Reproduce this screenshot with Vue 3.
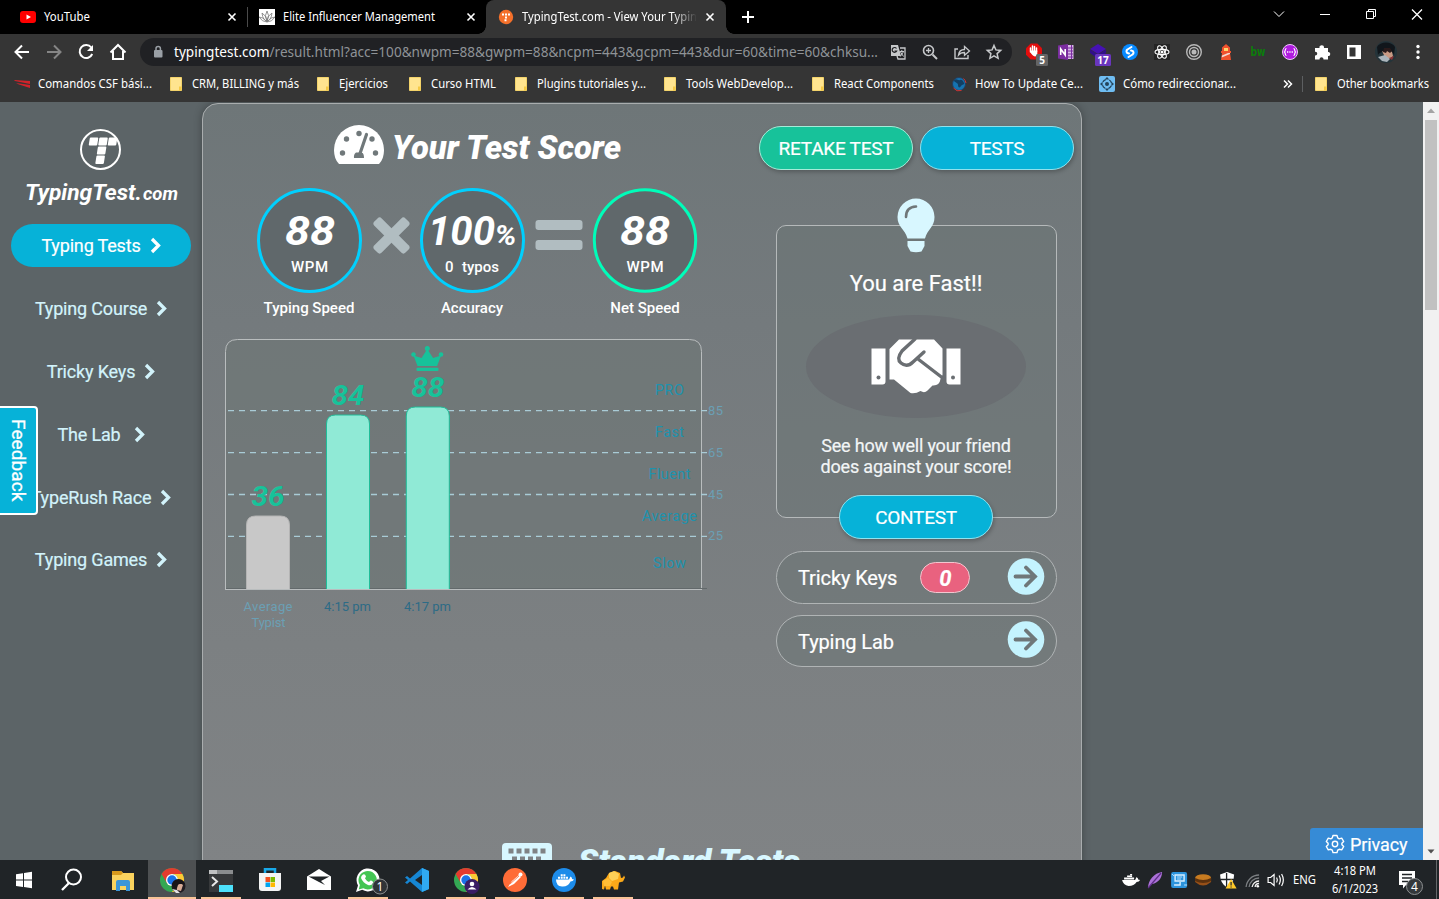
<script setup>
const bookmarks = [
  { icon: 'red', label: 'Comandos CSF bási...', w: 114, cell: 154 },
  { icon: 'folder', label: 'CRM, BILLING y más', w: 107, cell: 147 },
  { icon: 'folder', label: 'Ejercicios', w: 49, cell: 92 },
  { icon: 'folder', label: 'Curso HTML', w: 65, cell: 106 },
  { icon: 'folder', label: 'Plugins tutoriales y...', w: 109, cell: 149 },
  { icon: 'folder', label: 'Tools WebDevelop...', w: 107, cell: 148 },
  { icon: 'folder', label: 'React Components', w: 100, cell: 141 },
  { icon: 'globe', label: 'How To Update Ce...', w: 108, cell: 148 },
  { icon: 'move', label: 'Cómo redireccionar...', w: 113, cell: 180 },
]

const bookmarkIcons = {
  red: '<path d="M0 4l16 1v3L1 5zM2 7l14 2v3L5 8.500z" fill="#d2232a"/>',
  folder: '<path d="M2.500 1.500h11v13h-11z" fill="#ffe48f" stroke="#f3d36b"/><path d="M11 10.500h2.500V14.500H11z" fill="#f5c945"/>',
  globe: '<circle cx="8" cy="8" r="6.500" fill="#1673b0" stroke="#263d5c"/><path d="M3 4c3-2 4 1 6 0s3 1 4 3-2 1-3 3-3 2-3-1-4-2-4-5z" fill="#123f63"/><path d="M2.500 12a7 7 0 0 0 8 2.500M12.500 2.500A7 7 0 0 1 15 7" stroke="#d2332f" fill="none"/>',
  move: '<rect width="16" height="16" rx="2" fill="#6fbdf2"/><circle cx="8" cy="8" r="2" fill="#24445c"/><circle cx="8" cy="8" r="4.600" fill="none" stroke="#24445c" stroke-width="1.300" stroke-dasharray="3.600 3.630" stroke-dashoffset="-1.800"/><path d="M8 1l2.300 2.600H5.700zM8 15l2.300-2.600H5.700zM1 8l2.600-2.300v4.600zM15 8l-2.600-2.300v4.600z" fill="#24445c"/>',
}

const navIcons = [
  '<path d="M19 12H6M12 5.500L5.500 12l6.500 6.500" fill="none" stroke="#fff" stroke-width="2"/>',
  '<path d="M5 12h13M12 5.500l6.500 6.500-6.500 6.500" fill="none" stroke="#858585" stroke-width="2"/>',
  '<path d="M17.300 7.500A6.500 6.500 0 1 0 18.200 14" fill="none" stroke="#fff" stroke-width="2"/><path d="M19 5v6h-6z" fill="#fff"/>',
  '<path d="M4.500 12.500L12 5l7.500 7.500M7 11v8h10v-8" fill="none" stroke="#fff" stroke-width="2"/>',
]

const pageActions = [
  '<path d="M5 5h7l3 11H5z" fill="#c6c8ca"/><path d="M14 8h5v11h-7l-1-3" fill="none" stroke="#c6c8ca" stroke-width="1.300"/><path d="M10.500 8.500a2.400 2.400 0 1 0 .2 2.500H8.500" fill="none" stroke="#202124" stroke-width="1.200"/><path d="M13.500 11.500H18M15.800 10v1.500M14.500 12l3 4.500M17.300 12l-3 4.500" stroke="#c6c8ca"/>',
  '<circle cx="10.500" cy="10.500" r="5" fill="none" stroke="#c6c8ca" stroke-width="1.600"/><path d="M14.500 14.500L19 19" stroke="#c6c8ca" stroke-width="2"/><path d="M8 10.500h5M10.500 8v5" stroke="#c6c8ca" stroke-width="1.300"/>',
  '<path d="M8 9H5v9.500h13V15" fill="none" stroke="#c6c8ca" stroke-width="1.400"/><path d="M8.500 15c.5-4 2.500-5.500 6-5.500V6.500L19.500 11l-5 4.300V12.500c-3 0-4.500.5-6 2.500z" fill="none" stroke="#c6c8ca" stroke-width="1.300"/>',
  '<path d="M12 5.500l1.900 4.400 4.800.5-3.600 3.200 1 4.700-4.100-2.500-4.100 2.500 1-4.700-3.600-3.200 4.800-.5z" fill="none" stroke="#c6c8ca" stroke-width="1.500"/>',
]

const extensions = [
  '<path d="M8.700 3.500h6.600L20 8.200v6.600l-4.700 4.700H8.700L4 14.800V8.200z" fill="#e40d0d"/><path d="M8.500 12V8m2 3V6m2 5V6.500m2 5V8" stroke="#fff" stroke-width="1.500" stroke-linecap="round"/><path d="M7.800 10.500h7.500v4c-1 3-5 3-7.500-4z" fill="#fff"/><rect x="14" y="14" width="12" height="12" rx="1.500" fill="#646464"/><text x="20" y="24" text-anchor="middle" class="badge">5</text>',
  '<path d="M14 5h5.500v14H14z" fill="#d9b7e8"/><path d="M4 5.500L14 4v16L4 18.500z" fill="#7b2da0"/><path d="M6.700 15V9l4.500 6V9" fill="none" stroke="#fff" stroke-width="1.600"/><path d="M14 8h5m-5 3h5m-5 3h5m-5 3h5" stroke="#7b2da0" stroke-width="1.200"/><path d="M17.500 5v14" stroke="#7b2da0" stroke-width="1"/>',
  '<path d="M12 4l8 5-8 5-8-5z" fill="#4612b4"/><path d="M4 9.500l8 5 8-5V13l-8 6-8-6z" fill="#30108a"/><rect x="9" y="14" width="16" height="12" rx="1.500" fill="#6936bd"/><text x="17" y="24" text-anchor="middle" class="badge">17</text>',
  '<circle cx="12" cy="12" r="8" fill="#078aff"/><path d="M13.500 7l-4 2.500a2 2 0 0 0 .5 3.700l1 .3M10.500 17l4-2.500a2 2 0 0 0-.5-3.700l-1-.3" fill="none" stroke="#fff" stroke-width="2" stroke-linecap="round"/>',
  '<path d="M4 4h16v16H4z" fill="#242424"/><g fill="none" stroke="#fff" stroke-width="1.100"><ellipse cx="12" cy="12" rx="7" ry="2.600"/><ellipse cx="12" cy="12" rx="7" ry="2.600" transform="rotate(60 12 12)"/><ellipse cx="12" cy="12" rx="7" ry="2.600" transform="rotate(120 12 12)"/></g><circle cx="12" cy="12" r="1.500" fill="#fff"/>',
  '<g fill="none" stroke="#b9b9b9" stroke-width="1.400"><circle cx="12" cy="12" r="7.300"/><circle cx="12" cy="12" r="4.500"/></g><circle cx="12" cy="12" r="2.500" fill="#b9b9b9"/>',
  '<path d="M8 7.500L12 4l4 3.500V11h1v2H7v-2h1zM8 13h8l1 7H7z" fill="#f0512d"/><path d="M10 8h4v3h-4z" fill="#ffd46b"/><path d="M8 15.500l6-2.500h2v1l-8.300 3.500z" fill="#f6d6cf"/>',
  '<text x="12" y="16" text-anchor="middle" fill="#0b7d0b" class="bw" textLength="15" lengthAdjust="spacingAndGlyphs">bw</text>',
  '<circle cx="12" cy="12" r="7.500" fill="#b01be0" stroke="#f0c8ff"/><path d="M8.500 8.500c-2 0-.5 2.500-2 3.500 1.500 1 0 3.500 2 3.500M15.500 8.500c2 0 .5 2.500 2 3.500-1.500 1 0 3.500-2 3.500" fill="none" stroke="#fff" stroke-width="1.200"/><path d="M9 12h6" stroke="#fff" stroke-width="1.300" stroke-dasharray="1.300 1"/>',
  '<path d="M5 8h4.500c-1-3 5-4 4.500 0h4v4c3-.5 3 4.500 0 4v3.500h-4.500c0-3-4-3-4 0H5v-4c3 .3 3-4 0-3.700z" fill="#fff"/>',
  '<path d="M5 5h14v14H5z" fill="#fff"/><path d="M7.500 7.500h6v9h-6z" fill="#353535"/>',
  '<circle cx="12" cy="12" r="11" fill="#24343a"/><path d="M3 7c3-6 15-6 18 0l-1 8c-2-5-6-3-8-6-2 4-6 2-8 6z" fill="#11161b"/><path d="M8 11c3 2 6-2 10 1l1 4c-3 4-6 3-8 1z" fill="#c99a84"/><path d="M9 12l3 1 1-2 3 2 2-2-2-3-6 0z" fill="#2a1a1a"/><path d="M4 17l7-2 5 4-3 3-5-1z" fill="#aab4bb"/><path d="M15 18l5-2-2 4z" fill="#8b3437"/>',
  '<g fill="#fff"><circle cx="12" cy="6.500" r="1.700"/><circle cx="12" cy="12" r="1.700"/><circle cx="12" cy="17.500" r="1.700"/></g>',
]

const chromeLogo = '<circle cx="13" cy="13" r="12" fill="#34a853"/><path d="M2.600 7a12 12 0 0 1 20.800 0H13L7.800 16z" fill="#e33b2e"/><path d="M23.400 7A12 12 0 0 1 13 25l5.200-9A6 6 0 0 0 13 7z" fill="#fcc934"/><circle cx="13" cy="13" r="6" fill="#fff"/><circle cx="13" cy="13" r="4.700" fill="#1a73e8"/>'

const tasks = [
  { cell: 48, art: '<path d="M5 7.200l7-1V12.600H5zM13 6l8-1.200v7.800h-8zM5 13.500h7v6.400l-7-1zM13 13.500h8v7.800L13 20z" fill="#fff"/>' },
  { cell: 49, art: '<circle cx="13.500" cy="10" r="7.500" fill="none" stroke="#fff" stroke-width="2"/><path d="M9 16L2 23" stroke="#fff" stroke-width="2.300"/>' },
  { cell: 51, art: '<path d="M2 4h9l2 2h11v17H2z" fill="#fbd35e"/><path d="M2 4h9l2 2-2 2H2z" fill="#d99a1c"/><path d="M6 15q0-2 2-2h10q2 0 2 2v9h-4v-5h-6v5H6z" fill="#3c96d8"/>' },
  { cell: 48, active: true, art: chromeLogo + '<circle cx="19.500" cy="19" r="7" fill="#201b20"/><path d="M16 17l5-2 3 3-2 6-4-1z" fill="#d7aa95"/><path d="M13 18c2-7 10-7 13-1-4 1-5-1-7 1l-2 6z" fill="#171418"/><path d="M13 22l5 1 3 3h-4z" fill="#e2e0e3"/>' },
  { cell: 49, run: true, art: '<path d="M1 3h24v22H1z" fill="#37393b"/><path d="M1 3h8v4H1z" fill="#c1c2c3"/><path d="M9 3h16v4H9z" fill="#8b8d8f"/><path d="M4 10l5 4.500-5 4.500" fill="none" stroke="#e8e8e8" stroke-width="2"/><path d="M11 18h14v7H11z" fill="#4de1fb"/>' },
  { cell: 49, art: '<path d="M8 6V2.200h10V6" fill="none" stroke="#18a9e9" stroke-width="2.500"/><path d="M2 6h22v15q0 3-3 3H5q-3 0-3-3z" fill="#f4f4f4"/><path d="M8.500 10H13v5H8.500z" fill="#f25022"/><path d="M13.500 10H18v5h-4.500z" fill="#7fba00"/><path d="M8.500 15.500H13V20H8.500z" fill="#00a4ef"/><path d="M13.500 15.500H18V20h-4.500z" fill="#ffb900"/>' },
  { cell: 49, art: '<path d="M1 9.500L13 2l12 7.500V23H1z" fill="#fff"/><path d="M2.500 9.500h21L15 14l4 4-6-3z" fill="#202427"/>' },
  { cell: 49, run: true, art: '<g transform="translate(-1 0)"><path d="M2 25l2-6.500A11.500 11.500 0 1 1 8.200 22.800z" fill="#fff"/><path d="M4.700 22.500l1.200-4.400a9.200 9.200 0 1 1 3.400 3.200z" fill="#43c553"/><path d="M9 7.500q2-1 3 2l-1 2q1.500 2.500 4 3.500l1.500-1.500q3 .5 2.500 2.500-1.500 3-5 2-5-2-7-7 0-2.500 2-3.500z" fill="#fff"/></g><circle cx="25" cy="19.500" r="7.500" fill="#303437" stroke="#8d9091"/><text x="25" y="24" text-anchor="middle" class="num">1</text>' },
  { cell: 49, art: '<path d="M18 1l7 3v18l-7 3L6 14.500 3 17l-2-1.500L4 13 1 10.500 3 9l3 2.500z" fill="#1687d4"/><path d="M18 8v10l-7-5z" fill="#202427"/><path d="M18 1l7 3v18l-7 3z" fill="#30aaf2"/>' },
  { cell: 49, run: true, art: chromeLogo + '<circle cx="19" cy="19.500" r="7.500" fill="#3a1d64"/><circle cx="19" cy="17" r="2.300" fill="#fff"/><path d="M14.500 22.500q4.500-5 9 0z" fill="#fff"/>' },
  { cell: 49, run: true, art: '<circle cx="13" cy="13" r="12" fill="#ff6c37"/><circle cx="18.500" cy="7.500" r="2" fill="#fff"/><path d="M17 8l2 2-7 7-6 3 4-6z" fill="#fff"/><path d="M8 17l9-8" stroke="#ff6c37" stroke-width=".8"/>' },
  { cell: 49, run: true, art: '<circle cx="13" cy="13" r="12" fill="#1d8cea"/><path d="M5 12.500h13l1.500-3q2 1 1.500 2.500l2 .5q-1 2-3.500 2-2.500 5.500-8.500 5T5 12.500z" fill="#fff"/><path d="M7 9.700h2v2H7zM9.700 9.700h2v2h-2zM12.400 9.700h2v2h-2zM15 9.700h2v2h-2zM9.700 7.200h2v2h-2zM12.400 7.200h2v2h-2z" fill="#fff"/>' },
  { cell: 49, run: true, art: '<path d="M2 22v-8l4-3 3-5 6-2 5 2 1 5 2-.5 1-2 1 2-2 4-4 1-1 7h-4l-1-3h-2l-1 3H6l-1-4-1 4z" fill="#fba919"/><path d="M9 6l5-2 5 3-1 5-6 2-3-3z" fill="#ffd157"/><path d="M3 14l5-3 4 4-2 4H4z" fill="#ffbd36"/>' },
]

const tray = [
  '<path d="M3 12h13l1.500-3q2 1.500 1.500 2.500l2 .5q-1 2-3.500 2Q15 18 9.500 18 4 17 3 12z" fill="#fff"/><path d="M5 9.500h10v2H5zM8 7.500h5v1.500H8zM11 6h2v1.200h-2z" fill="#fff"/>',
  '<path d="M5 20C5 12 11 5 19 4c0 6-4 11-10 12z" fill="#ab71d8"/><path d="M5 20L18 5" stroke="#5d2c86" stroke-width="1.200"/>',
  '<rect x="4" y="4" width="16" height="16" rx="2" fill="#2c93db"/><path d="M8 7h9v6H8zM7 17h6v-3" fill="none" stroke="#d8efff" stroke-width="1.400"/><path d="M10 9h5m-5 2h4M5 6l2 2m10 9h3" stroke="#b7e3ff"/>',
  '<path d="M4 10v4q8 7 16 0v-4z" fill="#975018"/><ellipse cx="12" cy="10" rx="8" ry="3.800" fill="#c77b20"/><path d="M4 10q8 4 16 0v3q-8 4-16 0z" fill="#5b310e"/>',
  '<path d="M12 4l7 2.500q0 9-7 13-7-4-7-13z" fill="#fff"/><path d="M11.500 5v14M5 11.500h14" stroke="#202427" stroke-width="1.300"/><path d="M16 11l5.500 9.500h-11z" fill="#ffc928"/><path d="M16 14v3.500m0 1v1" stroke="#333" stroke-width="1.300"/>',
  '<g fill="none" stroke="#7b7f82" stroke-width="1.300"><path d="M6 19A13 13 0 0 1 19 7M9 19A10 10 0 0 1 19 10"/></g><path d="M12 19a7 7 0 0 1 7-6M15 19a4 4 0 0 1 4-3.500" fill="none" stroke="#f1f1f1" stroke-width="1.300"/><circle cx="17.700" cy="18.300" r="1.300" fill="#fff"/>',
  '<path d="M4 9.500h2.500L10 6.500v11l-3.500-3H4z" fill="none" stroke="#fff" stroke-width="1.200"/><path d="M12.500 9.500q1.500 2.500 0 5M15 7.500q2.500 4.500 0 9M17.500 6q3.500 6 0 12" fill="none" stroke="#fff" stroke-width="1.200"/>',
]

const nav = ['Typing Tests', 'Typing Course', 'Tricky Keys', 'The Lab', 'TypeRush Race', 'Typing Games']

const gridLines = [
  { y: 410.700, tick: 85 },
  { y: 452.600, tick: 65 },
  { y: 494.500, tick: 45 },
  { y: 536.400, tick: 25 },
]
const zones = [
  { label: 'PRO', y: 395, w: 29 },
  { label: 'Fast', y: 437, w: 29 },
  { label: 'Fluent', y: 479, w: 42 },
  { label: 'Average', y: 521, w: 55 },
  { label: 'Slow', y: 568, w: 33 },
]
const bars = [
  { x: 246.500, top: 516, value: 36, fill: '#c8c8c8', stroke: '#b4b4b4' },
  { x: 326.500, top: 415, value: 84, fill: '#90ead6', stroke: '#20bd99' },
  { x: 406.300, top: 407, value: 88, fill: '#90ead6', stroke: '#20bd99' },
]
const barPath = (b) => `M${b.x} 589V${b.top + 9}Q${b.x} ${b.top} ${b.x + 9} ${b.top}H${b.x + 34}Q${b.x + 43} ${b.top} ${b.x + 43} ${b.top + 9}V589`
</script>

<template>
  <div class="screen">
    <header class="tabs">
      <div class="tab first">
        <svg width="16" height="16" viewBox="0 0 16 16"><rect y="2" width="16" height="12" rx="3" fill="#f00" /><path d="M6.500 5.500L11 8l-4.500 2.500z" fill="#fff" /></svg>
        <svg class="ui" width="175" height="18"><text x="0" y="13" textLength="46" lengthAdjust="spacingAndGlyphs">YouTube</text></svg>
        <svg class="x" width="10" height="10" viewBox="0 0 10 10"><path d="M1.500 1.500l7 7m0-7l-7 7" /></svg>
      </div>
      <i class="tab-sep"></i>
      <div class="tab second">
        <svg width="16" height="16" viewBox="0 0 16 16"><path d="M0 0h16v16H0z" fill="#fff" /><path d="M8 2q3 4 0 10-3-6 0-10zM8 12Q4 12 3 4q4 2 5 8zm0 0q4 0 5-8-4 2-5 8zM8 13Q3 13 0 8q5 0 8 5zm0 0q5 0 8-5-5 0-8 5z" fill="none" stroke="#777" stroke-width=".8" /></svg>
        <svg class="ui" width="175" height="18"><text x="0" y="13" textLength="152" lengthAdjust="spacingAndGlyphs">Elite Influencer Management</text></svg>
        <svg class="x" width="10" height="10" viewBox="0 0 10 10"><path d="M1.500 1.500l7 7m0-7l-7 7" /></svg>
      </div>
      <div class="tab current">
        <svg width="16" height="16" viewBox="0 0 16 16"><circle cx="8" cy="8" r="7.200" fill="#f4702a" /><path d="M4 4.500h2v2H4zM7 4.500h2v2H7zM10 4.500h2v2h-2zM7 7.500h2v2H7zM6.500 10.300h2v2h-2z" fill="#fff" /></svg>
        <div class="fade"><svg class="ui" width="175" height="18"><text x="0" y="13" textLength="175" lengthAdjust="spacingAndGlyphs">TypingTest.com - View Your Typin</text></svg></div>
        <svg class="x" width="10" height="10" viewBox="0 0 10 10"><path d="M1.500 1.500l7 7m0-7l-7 7" /></svg>
      </div>
      <svg class="plus" width="14" height="14" viewBox="0 0 14 14"><path d="M7 1v12M1 7h12" stroke="#fff" stroke-width="2" /></svg>
      <div class="win">
        <svg viewBox="0 0 46 28"><path d="M18 11.500l5 5 5-5" /></svg>
        <svg viewBox="0 0 46 28"><path d="M18 14.500h10" /></svg>
        <svg viewBox="0 0 46 28"><path d="M18.500 11.500h7v7h-7zM20.500 11.500v-2h7v7h-2" /></svg>
        <svg viewBox="0 0 46 28"><path d="M18 9.500l10 10m0-10l-10 10" stroke-width="1.300" /></svg>
      </div>
    </header>

    <div class="toolbar">
      <svg v-for="(n, i) in navIcons" :key="i" class="cell" viewBox="-4 0 32 24" v-html="n"></svg>
      <div class="omnibox">
        <svg width="12" height="14" viewBox="0 0 12 14"><rect x="2" y="5" width="8.500" height="7.500" rx="1" fill="#9aa0a6" /><path d="M4 6V3.500q0-2 2.200-2t2.200 2V6" fill="none" stroke="#9aa0a6" stroke-width="1.500" /></svg>
        <svg class="url" width="708" height="24"><text x="0" y="17" textLength="704" lengthAdjust="spacingAndGlyphs"><tspan fill="#fff">typingtest.com</tspan><tspan fill="#8f9397">/result.html?acc=100&amp;nwpm=88&amp;gwpm=88&amp;ncpm=443&amp;gcpm=443&amp;dur=60&amp;time=60&amp;chksu...</tspan></text></svg>
        <svg v-for="(n, i) in pageActions" :key="i" class="cell" viewBox="-4 0 32 24" v-html="n"></svg>
      </div>
      <svg v-for="(n, i) in extensions" :key="'e' + i" class="cell ext" viewBox="-4 0 32 24" v-html="n"></svg>
    </div>

    <nav class="bookmarks">
      <div v-for="b in bookmarks" :key="b.label" class="bookmark" :style="{ width: b.cell + 'px' }">
        <svg width="16" height="16" v-html="bookmarkIcons[b.icon]"></svg>
        <svg class="ui" :width="b.w + 2" height="18"><text x="0" y="13" :textLength="b.w" lengthAdjust="spacingAndGlyphs">{{ b.label }}</text></svg>
      </div>
      <svg class="more" width="18" height="12" viewBox="0 0 18 12"><path d="M5 2.500L8.500 6 5 9.500M9 2.500L12.500 6 9 9.500" fill="none" stroke="#fff" stroke-width="1.500" /></svg>
      <i class="bm-sep"></i>
      <div class="bookmark">
        <svg width="16" height="16" v-html="bookmarkIcons.folder"></svg>
        <svg class="ui" width="94" height="18"><text x="0" y="13" textLength="92" lengthAdjust="spacingAndGlyphs">Other bookmarks</text></svg>
      </div>
    </nav>

    <main class="page">
      <aside class="side">
        <svg class="logo" width="180" height="84" viewBox="11 125 180 84">
          <circle cx="100.500" cy="149.500" r="19.500" fill="none" stroke="#fff" stroke-width="2" />
          <g transform="translate(102 149.500) skewX(-9)" fill="#fff">
            <rect x="-14" y="-12" width="8.500" height="8" rx="1" /><rect x="-4.500" y="-12" width="8.500" height="8" rx="1" /><rect x="5" y="-12" width="8.500" height="8" rx="1" />
            <rect x="-4.500" y="-3" width="8.500" height="8" rx="1" /><rect x="-4.500" y="6" width="8.500" height="8.500" rx="1" />
          </g>
          <text x="25" y="200" class="exo" font-size="22.500" textLength="117" lengthAdjust="spacingAndGlyphs">TypingTest.</text>
          <text x="143" y="200" class="exo" font-size="19" textLength="35" lengthAdjust="spacingAndGlyphs">com</text>
        </svg>
        <a v-for="(n, i) in nav" :key="n" class="link" :class="{ on: i === 0, wide: n === 'The Lab' }">
          <span>{{ n }}</span>
          <svg width="11" height="17" viewBox="0 0 11 17"><path d="M2 2l6.500 6.500L2 15" fill="none" stroke="currentColor" stroke-width="3.300" /></svg>
        </a>
      </aside>

      <section class="panel">
        <div class="columns">
          <div class="left">
            <div class="title">
              <svg width="50" height="39" viewBox="0 0 50 39">
                <path d="M5 39Q0 34 0 25a25 25 0 0 1 50 0q0 9-5 14z" fill="#fff" />
                <g fill="#70787a"><circle cx="8.500" cy="28" r="2.700" /><circle cx="12.500" cy="14" r="2.700" /><circle cx="25" cy="8.500" r="2.700" /><circle cx="38" cy="14" r="2.700" /><circle cx="41.500" cy="28" r="2.700" /><path d="M22 27.500h6q2 1 2 5.500H20q-.5-4 2-5.500z" /></g>
                <path d="M33 9.500L26 27" stroke="#fff" stroke-width="6" /><path d="M32.500 9.500L26 28.500" stroke="#70787a" stroke-width="3.200" stroke-linecap="round" />
              </svg>
              <svg width="232" height="48"><text x="-1" y="34" class="exo heavy" font-size="34" textLength="229" lengthAdjust="spacingAndGlyphs">Your Test Score</text></svg>
            </div>

            <div class="dials">
              <div class="dial">
                <svg width="105" height="105"><circle cx="52.500" cy="52.500" r="51" stroke="#00d0ff" /><text x="28" y="57" class="exo" font-size="41" textLength="50" lengthAdjust="spacingAndGlyphs">88</text><text x="34" y="84" class="unit" textLength="37">WPM</text></svg>
                <span>Typing Speed</span>
              </div>
              <svg class="op" width="37" height="105" viewBox="0 0 37 105"><g fill="#b1bdc1" transform="translate(18.500 47.500)"><rect x="-22" y="-5.200" width="44" height="10.400" rx="3" transform="rotate(45)" /><rect x="-22" y="-5.200" width="44" height="10.400" rx="3" transform="rotate(-45)" /></g></svg>
              <div class="dial">
                <svg width="105" height="105"><circle cx="52.500" cy="52.500" r="51" stroke="#00d0ff" /><text x="8" y="57" class="exo" font-size="41" textLength="67" lengthAdjust="spacingAndGlyphs">100</text><text x="74.500" y="57" class="exo" font-size="27" textLength="22" lengthAdjust="spacingAndGlyphs">%</text><text x="25" y="84" class="unit">0</text><text x="42" y="84" class="unit" textLength="37">typos</text></svg>
                <span>Accuracy</span>
              </div>
              <svg class="op" width="48" height="105" viewBox="0 0 48 105"><rect y="32" x=".5" width="47" height="10" rx="3" fill="#b1bdc1" /><rect y="52" x=".5" width="47" height="10" rx="3" fill="#b1bdc1" /></svg>
              <div class="dial">
                <svg width="105" height="105"><circle cx="52" cy="52.500" r="50.700" stroke="#00fdb9" /><text x="27" y="57" class="exo" font-size="41" textLength="50" lengthAdjust="spacingAndGlyphs">88</text><text x="33.500" y="84" class="unit" textLength="37">WPM</text></svg>
                <span>Net Speed</span>
              </div>
            </div>

            <svg class="chart" width="520" height="310" viewBox="220 330 520 310">
              <path d="M225.500 589.500V351.500Q225.500 339.500 237.500 339.500H689.500Q701.500 339.500 701.500 351.500V589.500Z" fill="#6f7777" fill-opacity=".75" stroke="#b9bdbe" />
              <path d="M226 588.500H707" stroke="#62696b" />
              <path v-for="g in gridLines" :key="g.y" :d="`M228 ${g.y}H707`" stroke="#a9cbd6" stroke-width="1.300" stroke-dasharray="6 5" />
              <path v-for="b in bars" :key="b.x" :d="barPath(b)" :fill="b.fill" :stroke="b.stroke" />
              <path d="M225 589.500H702" stroke="#b9bdbe" />
              <text v-for="b in bars" :key="'v' + b.x" :x="b.x + 5" :y="b.top - 10" class="value" textLength="33" lengthAdjust="spacingAndGlyphs">{{ b.value }}</text>
              <g fill="#17c29a"><circle cx="413.500" cy="354.500" r="2.300" /><circle cx="427.300" cy="348.500" r="2.500" /><circle cx="441" cy="354.500" r="2.300" /><path d="M413.500 355.500l8 2.500 5.800-9 5.800 9 8-2.500-4 10.500h-19.600z" /><rect x="416.500" y="367.800" width="22" height="3.300" rx="1" /></g>
              <text v-for="z in zones" :key="z.label" :x="669.500 - z.w / 2" :y="z.y" class="zone" :textLength="z.w">{{ z.label }}</text>
              <text v-for="g in gridLines" :key="'t' + g.y" x="708" :y="g.y + 4" class="tick" textLength="15">{{ g.tick }}</text>
              <text x="243.500" y="611" class="tick" textLength="49">Average</text>
              <text x="251.500" y="627" class="tick" textLength="34">Typist</text>
              <text x="324" y="611" class="time" textLength="47">4:15 pm</text>
              <text x="404" y="611" class="time" textLength="47">4:17 pm</text>
            </svg>
          </div>

          <div class="right">
            <div class="actions"><button class="green">RETAKE TEST</button><button>TESTS</button></div>
            <div class="card">
              <svg class="bulb" width="38" height="55" viewBox="0 0 38 55"><path d="M19 .5a18.500 18.500 0 0 1 18.500 18.500c0 10-7 12-9.500 21.500H10.500C8 31 .5 29 .5 19A18.500 18.500 0 0 1 19 .5z" fill="#d8f7ff" /><path d="M10.500 43h17v5l-3 5.500q-5.500 1.500-11 0L10.500 48z" fill="#d8f7ff" /><path d="M9 19q0-10 10-10.500" fill="none" stroke="#6f7779" stroke-width="2.600" stroke-linecap="round" /></svg>
              <h2>You are Fast!!</h2>
              <div class="oval">
                <svg width="90" height="54" viewBox="0 0 90 54">
                  <path d="M.5 9.500H14.500V42.500q0 3-3 3H.5zM75.500 9.500H89.500v36h-11q-3 0-3-3z" fill="#fff" />
                  <path d="M18.500 10L28 .5h35l8.500 9V36q-1.500 2-2 4-1 7-8 6.500-3 3-5 5-3 3-7 .5-5 3-10 2L23 40.500h-4.500z" fill="#fff" />
                  <path d="M44 0L31 12q-6 8-1 12 6 5 12-1l11-10M47 20l26 20" fill="none" stroke="#6a6e72" stroke-width="3.400" stroke-linecap="round" />
                  <circle cx="7.500" cy="38.500" r="2" fill="#6a6e72" /><circle cx="82" cy="38.500" r="2" fill="#6a6e72" />
                </svg>
              </div>
              <p>See how well your friend<br />does against your score!</p>
              <button class="contest">CONTEST</button>
            </div>
            <div v-for="n in ['Tricky Keys', 'Typing Lab']" :key="n" class="pill">
              <span>{{ n }}</span>
              <b v-if="n === 'Tricky Keys'">0</b>
              <svg width="38" height="38" viewBox="0 0 38 38"><circle cx="19" cy="18.500" r="18.300" fill="#c4f3fe" /><path d="M8.500 18.500H28M19 9.500l9 9-9 9" fill="none" stroke="#6f7779" stroke-width="3.800" stroke-linecap="round" /></svg>
            </div>
          </div>
        </div>
        <div class="standard">
          <svg width="50" height="36" viewBox="0 0 50 36"><rect width="50" height="36" rx="4" fill="#d8f7ff" /><path d="M6.500 8h37M10 16h30" stroke="#7f8284" stroke-width="5" stroke-dasharray="5 3" /></svg>
          <svg width="226" height="44"><text x="-1" y="30" class="exo pale heavy" font-size="34" textLength="222" lengthAdjust="spacingAndGlyphs">Standard Tests</text></svg>
        </div>
      </section>

      <div class="feedback"><span>Feedback</span></div>
      <div class="privacy">
        <svg width="20" height="20" viewBox="0 0 20 20" fill="none" stroke="#fff" stroke-width="1.400"><path d="M8 1.500h4l.7 2.400 1.500.9 2.500-.7 2 3.400-1.800 1.800v1.500l1.800 1.700-2 3.400-2.500-.6-1.500.9-.7 2.400H8l-.7-2.400-1.500-.9-2.500.6-2-3.400L3.100 10.800V9.300L1.300 7.500l2-3.400 2.500.7 1.500-.9z" stroke-linejoin="round" /><circle cx="10" cy="10" r="2.700" /></svg>
        <span>Privacy</span>
      </div>
      <div class="scroll">
        <svg width="16" height="17" viewBox="0 0 16 17"><path d="M4 11l4-4.500 4 4.500z" fill="#a3a3a3" /></svg>
        <i></i>
        <svg width="16" height="17" viewBox="0 0 16 17"><path d="M4.500 6.500h7L8 10.500z" fill="#505050" /></svg>
      </div>
    </main>

    <footer class="taskbar">
      <div v-for="(t, i) in tasks" :key="i" class="task" :class="{ run: t.run, active: t.active }" :style="{ width: t.cell + 'px' }">
        <svg width="26" height="26" viewBox="0 0 26 26" v-html="t.art"></svg>
      </div>
      <div class="tray">
        <svg v-for="(t, i) in tray" :key="i" width="24.200" height="24" viewBox="0 0 24 24" v-html="t"></svg>
        <svg class="ui lang" width="24" height="18"><text x="0" y="13" textLength="23" lengthAdjust="spacingAndGlyphs">ENG</text></svg>
        <svg class="ui clock" width="48" height="36"><text x="3" y="13" textLength="42" lengthAdjust="spacingAndGlyphs">4:18 PM</text><text x="1" y="31" textLength="46" lengthAdjust="spacingAndGlyphs">6/1/2023</text></svg>
        <svg class="note" width="26" height="28" viewBox="0 0 26 28"><path d="M1 2h16v14H8l-3 3.500V16H1z" fill="#fff" /><path d="M4 5.500h10M4 9h10M4 12.500h6" stroke="#202427" stroke-width="1.300" /><circle cx="16.500" cy="17.500" r="8" fill="#34383b" stroke="#8d9091" /><text x="16.500" y="22" text-anchor="middle" class="num">4</text></svg>
        <i class="edge"></i>
      </div>
    </footer>
  </div>
</template>

<style>
html, body { margin: 0; overflow: hidden; background: #5c6467; }
</style>

<style scoped>
.screen { width: 1439px; height: 899px; display: flex; flex-direction: column; overflow: hidden; font-family: Roboto, "Noto Sans", sans-serif; color: #fff; }
svg { display: block; flex: none; overflow: visible; }
i { display: block; flex: none; }
.ui text { font: 12px "Noto Sans", "Open Sans", sans-serif; fill: #fff; }

.tabs { height: 34px; background: #000; display: flex; align-items: center; flex: none; }
.tab { display: flex; align-items: center; gap: 8px; height: 34px; box-sizing: border-box; }
.first { width: 247px; padding-left: 20px; }
.second { width: 238px; padding-left: 11px; }
.tab-sep { width: 1px; height: 20px; background: #4a4a4a; }
.current { position: relative; width: 240px; padding-left: 12px; background: #353535; border-radius: 8px 8px 0 0; }
.current::before, .current::after { content: ""; position: absolute; bottom: 0; width: 8px; height: 8px; }
.current::before { left: -8px; background: radial-gradient(circle at 0 0, #000 7.500px, #353535 8px); }
.current::after { right: -8px; background: radial-gradient(circle at 100% 0, #000 7.500px, #353535 8px); }
.fade { width: 175px; mask-image: linear-gradient(90deg, #000 86%, transparent); }
.x { stroke: #fff; stroke-width: 1.600; fill: none; }
.plus { margin-left: 15px; }
.win { margin-left: auto; display: flex; align-self: flex-start; margin-right: -1px; }
.win svg { width: 46px; height: 28px; fill: none; stroke: #fff; stroke-width: 1; }

.toolbar { height: 36px; flex: none; display: flex; align-items: center; background: #353535; padding-left: 6px; }
.cell { width: 32px; height: 24px; }
.omnibox { width: 872px; height: 28px; margin: 0 6px 0 6px; border-radius: 14px; background: #202124; display: flex; align-items: center; box-sizing: border-box; padding-left: 12px; }
.url { margin-left: 10px; }
.url text { font: 14px "Noto Sans", "Open Sans", sans-serif; }
.ext :deep(.badge) { font: bold 10px "Noto Sans", sans-serif; fill: #fff; }
.ext :deep(.bw) { font: bold 12px "DejaVu Sans", sans-serif; }

.bookmarks { height: 32px; flex: none; box-sizing: border-box; padding: 0 0 4px 14px; display: flex; align-items: center; background: #353535; }
.bookmark { display: flex; gap: 8px; align-items: center; flex: none; }
.bm-sep { width: 1px; height: 16px; background: #5d5f61; margin: 0 10px 0 5px; }

.page { position: relative; height: 758px; flex: none; display: flex; align-items: flex-start; overflow: hidden; background: #5c6467; }
.side { width: 202px; flex: none; box-sizing: border-box; padding: 23px 11px 0; }
.link { display: flex; align-items: center; justify-content: center; gap: 9px; width: 180px; height: 43px; margin-bottom: 20px; border-radius: 22px; font-size: 18px; letter-spacing: -.17px; color: #d2f3fb; -webkit-text-stroke: .2px currentColor; }
.link:first-of-type { margin-top: 15px; }
.link:last-of-type { margin-top: -1px; }
.wide { gap: 13px; }
.on { background: #06b2d8; color: #fff; }

.exo { font-family: Roboto, "Open Sans", sans-serif; font-style: italic; font-weight: 700; fill: #fff; }
.heavy { font-weight: 900; }
.pale { fill: #d8f7ff; }

.panel { width: 880px; height: 790px; margin-top: 1px; flex: none; box-sizing: border-box; border: 1px solid #a9adae; border-radius: 16px; background: linear-gradient(#6e7678 0, #747a7d 220px, #7c8082 540px, #808385 760px); box-shadow: 0 0 8px rgba(0, 0, 0, .3); }
.columns { display: flex; height: 739px; }
.left { width: 548px; flex: none; }
.title { display: flex; gap: 9px; height: 39px; padding: 21px 0 24px 131px; }
.dials { display: flex; height: 142px; padding-left: 54px; }
.dial { width: 105px; display: flex; flex-direction: column; align-items: center; }
.dial circle { fill: #60686b; stroke-width: 3; }
.dial .unit { font: 500 15px Roboto, sans-serif; fill: #fff; }
.dial span { margin: 5px 1px 0 0; font: 500 15px/20px Roboto, sans-serif; white-space: nowrap; }
.op { margin: 0 10px 0 11px; }
.op ~ .op { margin-left: 10px; }
.chart { margin-left: 17px; }
.value { font: italic 700 27px Roboto, sans-serif; fill: #17c29a; }
.zone { font: 14.500px Roboto, sans-serif; fill: #1e92ad; }
.tick { font: 13px Roboto, sans-serif; fill: #6b9fb4; }
.time { font: 13px Roboto, sans-serif; fill: #2d6b86; }

.right { width: 330px; padding-top: 22px; }
.actions { display: flex; gap: 7px; padding-left: 8px; }
button { width: 154px; height: 44px; padding: 0; border: 1px solid #8fe2ee; border-radius: 22px; background: #06b2d8; color: #fff; font: 19px Roboto, sans-serif; letter-spacing: -.25px; -webkit-text-stroke: .2px #fff; box-shadow: 1px 2px 4px rgba(0, 0, 0, .25); }
.green { background: #17c29a; border-color: #a5ecd9; }
.card { position: relative; width: 281px; height: 293px; box-sizing: border-box; margin: 55px 0 33px 25px; padding-right: 1px; border: 1px solid #b5b9ba; border-radius: 10px; background: rgba(106, 116, 115, .5); display: flex; flex-direction: column; align-items: center; }
.bulb { position: absolute; top: -28px; left: 120px; }
.card h2 { margin: 44px 0 0; font: 400 22px/28px Roboto, sans-serif; -webkit-text-stroke: .2px #fff; }
.oval { width: 220px; height: 103px; margin-top: 17px; border-radius: 50%; background: #6a6e72; display: flex; align-items: center; justify-content: center; }
.oval svg { margin-top: -2px; }
.card p { margin: 17px 0 0; font-size: 18px; line-height: 21px; letter-spacing: -.2px; text-align: center; white-space: nowrap; color: #f2f5f6; -webkit-text-stroke: .2px currentColor; }
.contest { position: absolute; left: 62px; top: 269px; }
.pill { width: 281px; height: 53px; box-sizing: border-box; margin: 0 0 11px 25px; padding: 0 11px 0 21px; border: 1px solid #b0b4b5; border-radius: 27px; background: rgba(106, 116, 115, .5); display: flex; align-items: center; font-size: 20px; letter-spacing: -.1px; -webkit-text-stroke: .2px #fff; }
.pill:last-child { height: 52px; }
.pill:last-child span { margin-top: 2px; }
.pill svg { margin: -2px 0 0 auto; }
.pill b { margin-left: 23px; width: 48px; height: 29px; border: 1px solid #f3c6cf; border-radius: 16px; background: #e9627f; font: italic 700 22px/31px Roboto, sans-serif; text-align: center; }
.standard { display: flex; gap: 27px; padding-left: 299px; }

.feedback { position: absolute; left: -4px; top: 304px; width: 38px; height: 105px; border: 2px solid #fff; border-radius: 4px; background: #06b2d8; display: flex; align-items: center; justify-content: center; }
.feedback span { writing-mode: vertical-rl; font-size: 19px; letter-spacing: .1px; margin-left: 2px; -webkit-text-stroke: .3px #fff; }
.privacy { position: absolute; left: 1310px; top: 726px; width: 113px; height: 32px; box-sizing: border-box; padding-left: 15px; display: flex; align-items: center; gap: 5px; border-radius: 3px 0 0 0; background: #368bd6; font-size: 18px; letter-spacing: -.1px; -webkit-text-stroke: .2px #fff; }
.scroll { margin-left: auto; width: 16px; height: 758px; background: #f1f1f1; display: flex; flex-direction: column; }
.scroll i { width: 12px; height: 190px; margin: 1px 2px auto; background: #c1c1c1; }

.taskbar { height: 39px; flex: none; display: flex; background: #202427; }
.task { position: relative; display: flex; align-items: center; justify-content: center; box-sizing: border-box; padding-top: 1px; }
.active { background: #4d5052; }
.run::after, .active::after { content: ""; position: absolute; left: 4px; right: 4px; bottom: 0; height: 2px; background: #fac497; }
.active::after { left: 0; right: 0; }
.run::after { left: 5px; }
.task :deep(.num), .note .num { font: 12px "Noto Sans", sans-serif; fill: #fff; }
.tray { margin-left: auto; display: flex; align-items: center; height: 40px; }
.lang { margin-left: 5px; }
.clock { margin-left: 14px; }
.note { margin: 6px 0 0 19px; }
.edge { width: 1px; height: 39px; margin: -1px 2px 0 12px; background: #65686a; }
</style>
